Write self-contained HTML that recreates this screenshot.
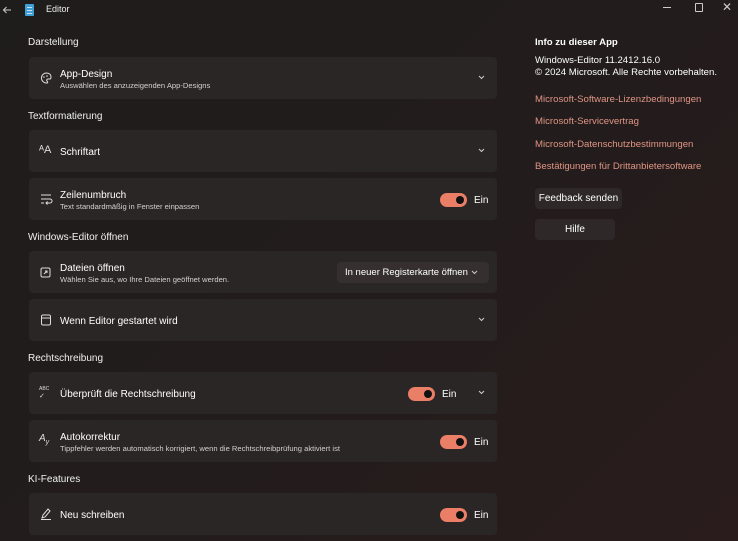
<!DOCTYPE html>
<html><head><meta charset="utf-8"><style>
*{margin:0;padding:0;box-sizing:border-box}
body{width:738px;height:541px;overflow:hidden;background:linear-gradient(135deg,#1f1c1c 0%,#221c1c 50%,#2a1c1c 100%);font-family:"Liberation Sans",sans-serif;color:#fff;position:relative}
.a{position:absolute;white-space:nowrap}
.h{font-size:10px;color:#f0f0f0;left:28px}
.card{position:absolute;left:29px;width:468px;height:42px;background:#2b2626;border-radius:4px}
.t{position:absolute;left:31px;font-size:10px;color:#fff}
.s{position:absolute;left:31px;font-size:7.6px;color:#d0d0d0}
.ic{position:absolute;left:10px;top:14px;width:14px;height:14px}
.chev{position:absolute;right:12px;top:17px;width:7px;height:7px}
.tg{position:absolute;width:27px;height:14px;border-radius:7px;background:#ea7e66}
.tg::after{content:"";position:absolute;right:3px;top:3px;width:8px;height:8px;border-radius:50%;background:#111}
.ein{position:absolute;font-size:10px;color:#fff}
.link{font-size:9.6px;color:#df9584;left:535px}
.btn{position:absolute;left:535px;background:#2e2828;border-radius:4px;font-size:10px;text-align:center;color:#fff}
</style></head><body>
<svg class="a" style="left:2px;top:5px" width="10" height="10" viewBox="0 0 10 10"><path d="M9 5H1.5M4.5 2L1.5 5l3 3" stroke="#ccc" fill="none" stroke-width="1"/></svg>
<div class="a" style="left:25px;top:4px;width:9px;height:12px;background:#3fa0d8;border-radius:1px"><div style="margin:3px 2px 0;height:1px;background:#cde"></div><div style="margin:2px 2px 0;height:1px;background:#cde"></div><div style="margin:2px 2px 0;height:1px;background:#cde"></div></div>
<div class="a" style="left:46px;top:4px;font-size:9px;color:#eee">Editor</div>
<div class="a" style="left:663px;top:7px;width:8px;height:1px;background:#ccc"></div>
<div class="a" style="left:695px;top:3px;width:8px;height:9px;border:1px solid #ccc;border-radius:1px"></div>
<div class="a" style="left:722px;top:0px;font-size:12px;color:#ccc">✕</div>

<div class="a h" style="top:37px">Darstellung</div>
<div class="card" style="top:57px">
<svg class="ic" viewBox="0 0 14 14"><path d="M7 2a5 5 0 1 0 1 10c1 0 1-1 0-2s0-2 1-2h2c1 0 1-1 1-2 0-2.5-2-4-5-4z" stroke="#ddd" fill="none"/><circle cx="5" cy="6" r=".8" fill="#ddd"/><circle cx="8" cy="5" r=".8" fill="#ddd"/></svg>
<div class="t" style="top:12px">App-Design</div><div class="s" style="top:24px">Auswählen des anzuzeigenden App-Designs</div>
<svg class="chev" viewBox="0 0 7 7"><path d="M1 2l2.5 2.5L6 2" stroke="#ccc" fill="none"/></svg></div>

<div class="a h" style="top:111px">Textformatierung</div>
<div class="card" style="top:130px">
<div class="ic" style="font-size:11px;color:#ddd;top:14px">ᴬA</div>
<div class="t" style="top:17px">Schriftart</div>
<svg class="chev" viewBox="0 0 7 7"><path d="M1 2l2.5 2.5L6 2" stroke="#ccc" fill="none"/></svg></div>
<div class="card" style="top:178px">
<svg class="ic" viewBox="0 0 14 14"><path d="M2 3h10M2 7h9a2 2 0 0 1 0 4H7m1.5-1.5L7 11l1.5 1.5M2 11h3" stroke="#ddd" fill="none"/></svg>
<div class="t" style="top:12px">Zeilenumbruch</div><div class="s" style="top:24px">Text standardmäßig in Fenster einpassen</div>
<div class="tg" style="left:411px;top:15px"></div><div class="ein" style="left:445px;top:17px">Ein</div></div>

<div class="a h" style="top:232px">Windows-Editor öffnen</div>
<div class="card" style="top:251px">
<svg class="ic" viewBox="0 0 14 14"><rect x="2" y="3" width="9" height="9" rx="1.5" stroke="#ddd" fill="none"/><path d="M5 9l3-3M6 6h2v2" stroke="#ddd" fill="none"/></svg>
<div class="t" style="top:12px">Dateien öffnen</div><div class="s" style="top:24px">Wählen Sie aus, wo Ihre Dateien geöffnet werden.</div>
<div style="position:absolute;left:308px;top:11px;width:152px;height:21px;background:#362f2f;border-radius:4px;font-size:9.5px;padding:5px 0 0 8px">In neuer Registerkarte öffnen</div>
<svg class="chev" style="right:19px;top:18px" viewBox="0 0 7 7"><path d="M1 2l2.5 2.5L6 2" stroke="#ccc" fill="none"/></svg></div>
<div class="card" style="top:299px">
<svg class="ic" viewBox="0 0 14 14"><rect x="2.5" y="2" width="9" height="10" rx="1.5" stroke="#ddd" fill="none"/><path d="M2.5 5h9" stroke="#ddd"/></svg>
<div class="t" style="top:17px">Wenn Editor gestartet wird</div>
<svg class="chev" viewBox="0 0 7 7"><path d="M1 2l2.5 2.5L6 2" stroke="#ccc" fill="none"/></svg></div>

<div class="a h" style="top:353px">Rechtschreibung</div>
<div class="card" style="top:372px">
<div class="ic" style="font-size:5px;color:#ddd;top:14px">ABC<br><span style="font-size:7px">✓</span></div>
<div class="t" style="top:17px">Überprüft die Rechtschreibung</div>
<div class="tg" style="left:379px;top:15px"></div><div class="ein" style="left:413px;top:17px">Ein</div>
<svg class="chev" viewBox="0 0 7 7"><path d="M1 2l2.5 2.5L6 2" stroke="#ccc" fill="none"/></svg></div>
<div class="card" style="top:420px">
<div class="ic" style="font-size:10px;color:#ddd;top:13px;font-style:italic">A<sub style="font-size:7px">y</sub></div>
<div class="t" style="top:12px">Autokorrektur</div><div class="s" style="top:24px">Tippfehler werden automatisch korrigiert, wenn die Rechtschreibprüfung aktiviert ist</div>
<div class="tg" style="left:411px;top:15px"></div><div class="ein" style="left:445px;top:17px">Ein</div></div>

<div class="a h" style="top:474px">KI-Features</div>
<div class="card" style="top:493px">
<svg class="ic" viewBox="0 0 14 14"><path d="M3 11l1-3 5-6 2 2-5 6zM2 12.5h10" stroke="#ddd" fill="none"/></svg>
<div class="t" style="top:17px">Neu schreiben</div>
<div class="tg" style="left:411px;top:15px"></div><div class="ein" style="left:445px;top:17px">Ein</div></div>

<div class="a" style="left:535px;top:37px;font-size:9.6px;font-weight:bold">Info zu dieser App</div>
<div class="a" style="left:535px;top:55px;font-size:9.6px;line-height:12px">Windows-Editor 11.2412.16.0<br>© 2024 Microsoft. Alle Rechte vorbehalten.</div>
<div class="a link" style="top:94px">Microsoft-Software-Lizenzbedingungen</div>
<div class="a link" style="top:116px">Microsoft-Servicevertrag</div>
<div class="a link" style="top:139px">Microsoft-Datenschutzbestimmungen</div>
<div class="a link" style="top:161px">Bestätigungen für Drittanbietersoftware</div>
<div class="btn" style="top:188px;width:87px;height:21px;padding-top:5px">Feedback senden</div>
<div class="btn" style="top:219px;width:80px;height:21px;padding-top:5px">Hilfe</div>
</body></html>
